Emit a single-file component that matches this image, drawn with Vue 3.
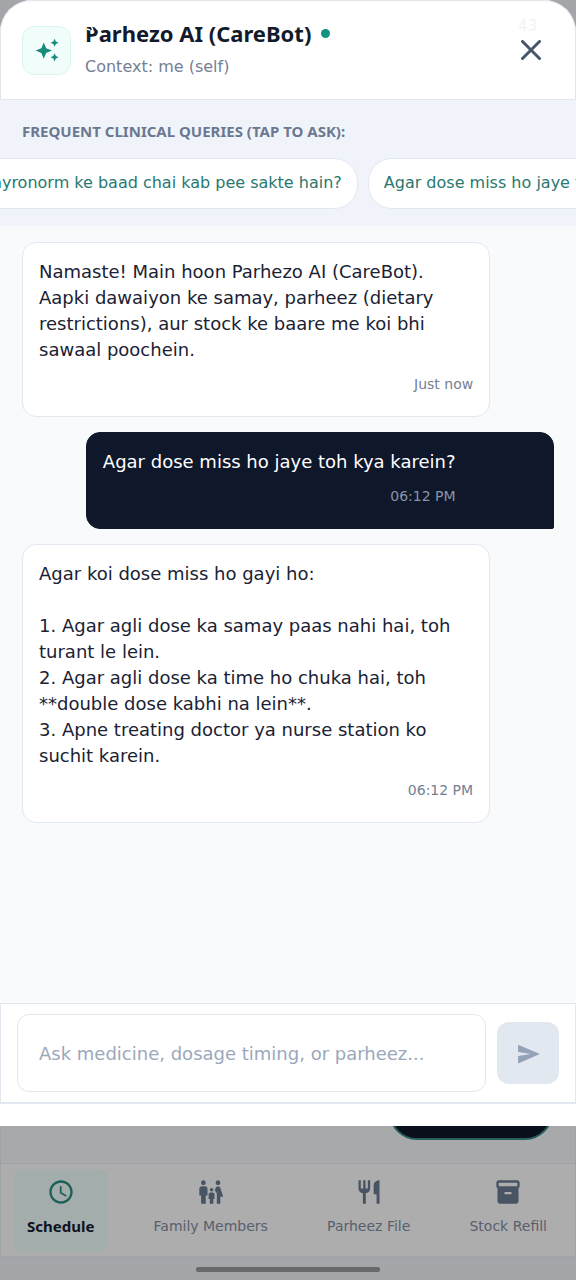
<script setup>
import { ref, onMounted } from 'vue'

const queries = [
  'Thyronorm ke baad chai kab pee sakte hain?',
  'Agar dose miss ho jaye toh kya karein?'
]
const messages = [
  {
    from: 'bot',
    time: 'Just now',
    text: 'Namaste! Main hoon Parhezo AI (CareBot).\nAapki dawaiyon ke samay, parheez (dietary\nrestrictions), aur stock ke baare me koi bhi\nsawaal poochein.'
  },
  { from: 'user', time: '06:12 PM', text: 'Agar dose miss ho jaye toh kya karein?' },
  {
    from: 'bot',
    time: '06:12 PM',
    text: 'Agar koi dose miss ho gayi ho:\n\n1. Agar agli dose ka samay paas nahi hai, toh\nturant le lein.\n2. Agar agli dose ka time ho chuka hai, toh\n**double dose kabhi na lein**.\n3. Apne treating doctor ya nurse station ko\nsuchit karein.'
  }
]
const draft = ref('')
const chipRow = ref(null)

onMounted(() => {
  const row = chipRow.value
  const second = row.children[1]
  row.scrollLeft += second.getBoundingClientRect().left - row.getBoundingClientRect().left - 368
})
</script>

<template>
  <div class="screen">
    <main class="sheet">
      <header class="head">
        <span class="avatar">
          <svg viewBox="0 0 24 24" width="26" height="26" aria-hidden="true">
            <path d="M9 5 11.2 10.300 16.500 12.500 11.200 14.700 9 20 6.800 14.700 1.500 12.500 6.800 10.300zM19 1.500l1.150 2.600L22.750 5.250l-2.600 1.150L19 9l-1.150-2.600-2.600-1.150 2.600-1.150zM19 15l1.150 2.600 2.600 1.150-2.600 1.150L19 22.500l-1.150-2.600-2.600-1.150 2.600-1.150z" />
          </svg>
        </span>
        <div class="titles">
          <h1>Parhezo AI (CareBot)<i class="dot"></i></h1>
          <p>Context: me (self)</p>
        </div>
        <button class="close" type="button" aria-label="Close">
          <svg viewBox="0 0 20 20" width="20" height="20" aria-hidden="true">
            <path d="M1.500 1.500l17 17M18.500 1.500l-17 17" />
          </svg>
        </button>
        <svg class="clock-trace" viewBox="0 0 16 8" width="16" height="8" aria-hidden="true">
          <path d="M2 4l3 1M6 1l2 4M10 2l3 3" />
        </svg>
        <span class="battery">43</span>
      </header>

      <section class="queries">
        <h2>FREQUENT CLINICAL QUERIES (TAP TO ASK):</h2>
        <div ref="chipRow" class="chips">
          <button v-for="q in queries" :key="q" type="button" class="chip">{{ q }}</button>
        </div>
      </section>

      <section class="chat">
        <article v-for="(m, i) in messages" :key="i" class="bubble" :class="m.from">
          <div class="content">
            <p>{{ m.text }}</p>
            <time>{{ m.time }}</time>
          </div>
        </article>
      </section>

      <form class="composer" @submit.prevent>
        <input v-model="draft" type="text" aria-label="Message" placeholder="Ask medicine, dosage timing, or parheez..." />
        <button type="submit" aria-label="Send" disabled>
          <svg viewBox="0 0 24 24" width="25" height="25" aria-hidden="true">
            <path d="M2 21.500 23 12.500 2 3.500v7l12 2-12 2z" />
          </svg>
        </button>
      </form>
    </main>

    <div class="behind"><span class="fab"></span></div>

    <nav class="tabs">
      <a href="#schedule" class="tab active">
        <svg viewBox="0 0 24 24" width="28" height="28" aria-hidden="true">
          <path d="M11.990 2C6.470 2 2 6.480 2 12s4.470 10 9.990 10C17.520 22 22 17.520 22 12S17.520 2 11.990 2zM12 20c-4.420 0-8-3.580-8-8s3.580-8 8-8 8 3.580 8 8-3.580 8-8 8zm.5-13H11v6l5.250 3.150.75-1.230-4.500-2.670z" />
        </svg>
        <span>Schedule</span>
      </a>
      <a href="#family" class="tab">
        <svg viewBox="0 0 24 24" width="28" height="28" aria-hidden="true">
          <path d="M16 4c0-1.110.89-2 2-2s2 .89 2 2-.89 2-2 2-2-.89-2-2zm4 18v-6h2.500l-2.540-7.630A2.010 2.010 0 0 0 18.060 7h-.12a2 2 0 0 0-1.900 1.370l-.86 2.580c1.080.6 1.820 1.730 1.820 3.050v8h3zm-7.500-10.500c.83 0 1.500-.67 1.500-1.500s-.67-1.500-1.500-1.500S11 9.170 11 10s.67 1.500 1.500 1.500zM5.500 6c1.110 0 2-.89 2-2s-.89-2-2-2-2 .89-2 2 .89 2 2 2zm2 16v-7H9V9c0-1.100-.9-2-2-2H4c-1.100 0-2 .9-2 2v6h1.500v7h4zm6.500 0v-4h1v-4c0-.82-.68-1.500-1.500-1.500h-2c-.82 0-1.500.68-1.500 1.500v4h1v4h3z" />
        </svg>
        <span>Family Members</span>
      </a>
      <a href="#parheez" class="tab">
        <svg viewBox="0 0 24 24" width="28" height="28" aria-hidden="true">
          <path d="M11 9H9V2H7v7H5V2H3v7c0 2.120 1.660 3.840 3.750 3.970V22h2.500v-9.030C11.340 12.840 13 11.120 13 9V2h-2v7zm5-3v8h2.500v8H21V2c-2.760 0-5 2.240-5 4z" />
        </svg>
        <span>Parheez File</span>
      </a>
      <a href="#stock" class="tab">
        <svg viewBox="0 0 24 24" width="28" height="28" aria-hidden="true">
          <path fill-rule="evenodd" d="M20 2H4c-1 0-2 .9-2 2v3.010c0 .72.43 1.340 1 1.690V20c0 1.100 1.100 2 2 2h14c.9 0 2-.9 2-2V8.700c.57-.35 1-.97 1-1.690V4c0-1.100-1-2-2-2zm-5 12H9v-2h6v2zm5-7H4V4h16v3z" />
        </svg>
        <span>Stock Refill</span>
      </a>
    </nav>
    <div class="gesture"><span></span></div>
  </div>
</template>

<style>
body {
  margin: 0;
  background: #a4a5a9;
}
</style>

<style scoped>
* {
  box-sizing: border-box;
}
.screen {
  min-height: 100vh;
  display: flex;
  flex-direction: column;
  background: #a4a5a9;
  color: #1a2233;
  font-family: "DejaVu Sans", "Noto Sans", sans-serif;
  overflow: hidden;
}
h1,
h2,
p {
  margin: 0;
}
h1,
h2,
.tab.active {
  font-family: "Noto Sans", "DejaVu Sans", sans-serif;
}
button,
input {
  font-family: inherit;
}
.sheet {
  flex: 1;
  display: flex;
  flex-direction: column;
  background: #fff;
  border-radius: 32px 32px 0 0;
  padding-bottom: 22px;
  overflow: hidden;
}
.head {
  position: relative;
  display: flex;
  align-items: center;
  height: 100px;
  padding: 0 22px 0 21px;
  border: 1px solid #e2e6ec;
  border-radius: 32px 32px 0 0;
}
.avatar {
  display: grid;
  place-items: center;
  width: 49px;
  height: 49px;
  border: 1px solid #d9f5ef;
  border-radius: 12px;
  background: #f0fdfa;
}
.avatar svg {
  fill: #178a7c;
}
.titles {
  flex: 1;
  margin-left: 14px;
}
.titles h1 {
  display: flex;
  align-items: center;
  gap: 10px;
  font-size: 22px;
  line-height: 32px;
  font-weight: 700;
  color: #131a2b;
}
.dot {
  width: 9px;
  height: 9px;
  border-radius: 50%;
  background: #14917f;
}
.titles p {
  margin-top: 2px;
  font-size: 16px;
  line-height: 32px;
  color: #748093;
}
.close {
  display: grid;
  place-items: center;
  width: 44px;
  height: 44px;
  padding: 0;
  border: 0;
  background: none;
}
.close svg {
  fill: none;
  stroke: #475569;
  stroke-width: 3;
  stroke-linecap: round;
}
.clock-trace {
  position: absolute;
  top: 24px;
  left: 84px;
  fill: none;
  stroke: #fff;
  stroke-width: 1.500;
}
.battery {
  position: absolute;
  top: 13px;
  right: 38px;
  font-size: 15px;
  line-height: 24px;
  color: #f3f3f3;
}
.queries {
  padding: 20px 0 17px;
  background: #f0f4fa;
}
.queries h2 {
  padding: 0 22px;
  font-size: 15px;
  line-height: 22px;
  font-weight: 700;
  color: #6b7890;
}
.chips {
  display: flex;
  gap: 10px;
  margin-top: 16px;
  padding: 0 22px;
  overflow-x: auto;
  scrollbar-width: none;
}
.chip {
  flex: none;
  height: 51px;
  padding: 0 15px 2px;
  border: 1px solid #e2e8f0;
  border-radius: 24px;
  background: #fff;
  font-size: 16px;
  color: #28786f;
}
.chat {
  flex: 1;
  display: flex;
  flex-direction: column;
  gap: 15px;
  padding: 16px 22px;
  background: #f8fafc;
}
.bubble {
  width: 88%;
  padding: 16px 16px 22px;
  border: 1px solid #e2e8f0;
  border-radius: 14px;
  background: #fff;
}
.bubble p {
  font-size: 18px;
  line-height: 26px;
  white-space: pre-line;
}
.bubble time {
  display: block;
  margin-top: 11px;
  text-align: right;
  font-size: 14px;
  line-height: 20px;
  color: #748093;
}
.user {
  align-self: flex-end;
  border-color: #0f172a;
  border-radius: 14px 14px 2px 14px;
  background: #0f172a;
  color: #fff;
}
.user .content {
  width: max-content;
  max-width: 100%;
}
.user time {
  color: #8a94a5;
}
.composer {
  display: flex;
  align-items: center;
  gap: 11px;
  padding: 10px 16px;
  border: 1px solid #e2e8f0;
  border-width: 1px 1px 2px;
}
.composer input {
  flex: 1;
  min-width: 0;
  height: 78px;
  padding: 0 21px;
  border: 1px solid #e2e8f0;
  border-radius: 12px;
  background: #fff;
  font-size: 18px;
  color: #0f172a;
}
.composer input::placeholder {
  color: #9ba8bb;
  opacity: 1;
}
.composer button {
  display: grid;
  place-items: center;
  width: 62px;
  height: 62px;
  padding: 0;
  border: 0;
  border-radius: 12px;
  background: #e2e8f0;
}
.composer svg {
  fill: #94a3b8;
}
.behind {
  position: relative;
  height: 37px;
  overflow: hidden;
  border-left: 1px solid #9fa2a7;
  border-right: 1px solid #9fa2a7;
  background: #a8a9ab;
}
.fab {
  position: absolute;
  right: 22px;
  bottom: 23px;
  width: 164px;
  height: 62px;
  border: 2px solid #285f5b;
  border-radius: 28px;
  background: #0a0f1c;
}
.tabs {
  display: flex;
  justify-content: space-between;
  padding: 5px 14px 4px 12px;
  border: 1px solid #9fa2a7;
  background: #adadad;
}
.tab {
  display: flex;
  flex-direction: column;
  align-items: center;
  height: 83px;
  padding: 9px 14px 0;
  border-radius: 10px;
  font-size: 14px;
  line-height: 20px;
  color: #58606d;
  text-decoration: none;
}
.tab span {
  margin-top: 10px;
}
.tab svg {
  fill: #485363;
}
.tab.active {
  background: #a3adab;
  color: #0d1320;
  font-size: 15px;
  font-weight: 700;
}
.tab.active svg {
  fill: #1c5f57;
}
.gesture {
  display: flex;
  justify-content: center;
  height: 23px;
  padding-top: 10px;
}
.gesture span {
  width: 32%;
  height: 5px;
  border-radius: 2px;
  background: #68696b;
}
</style>
